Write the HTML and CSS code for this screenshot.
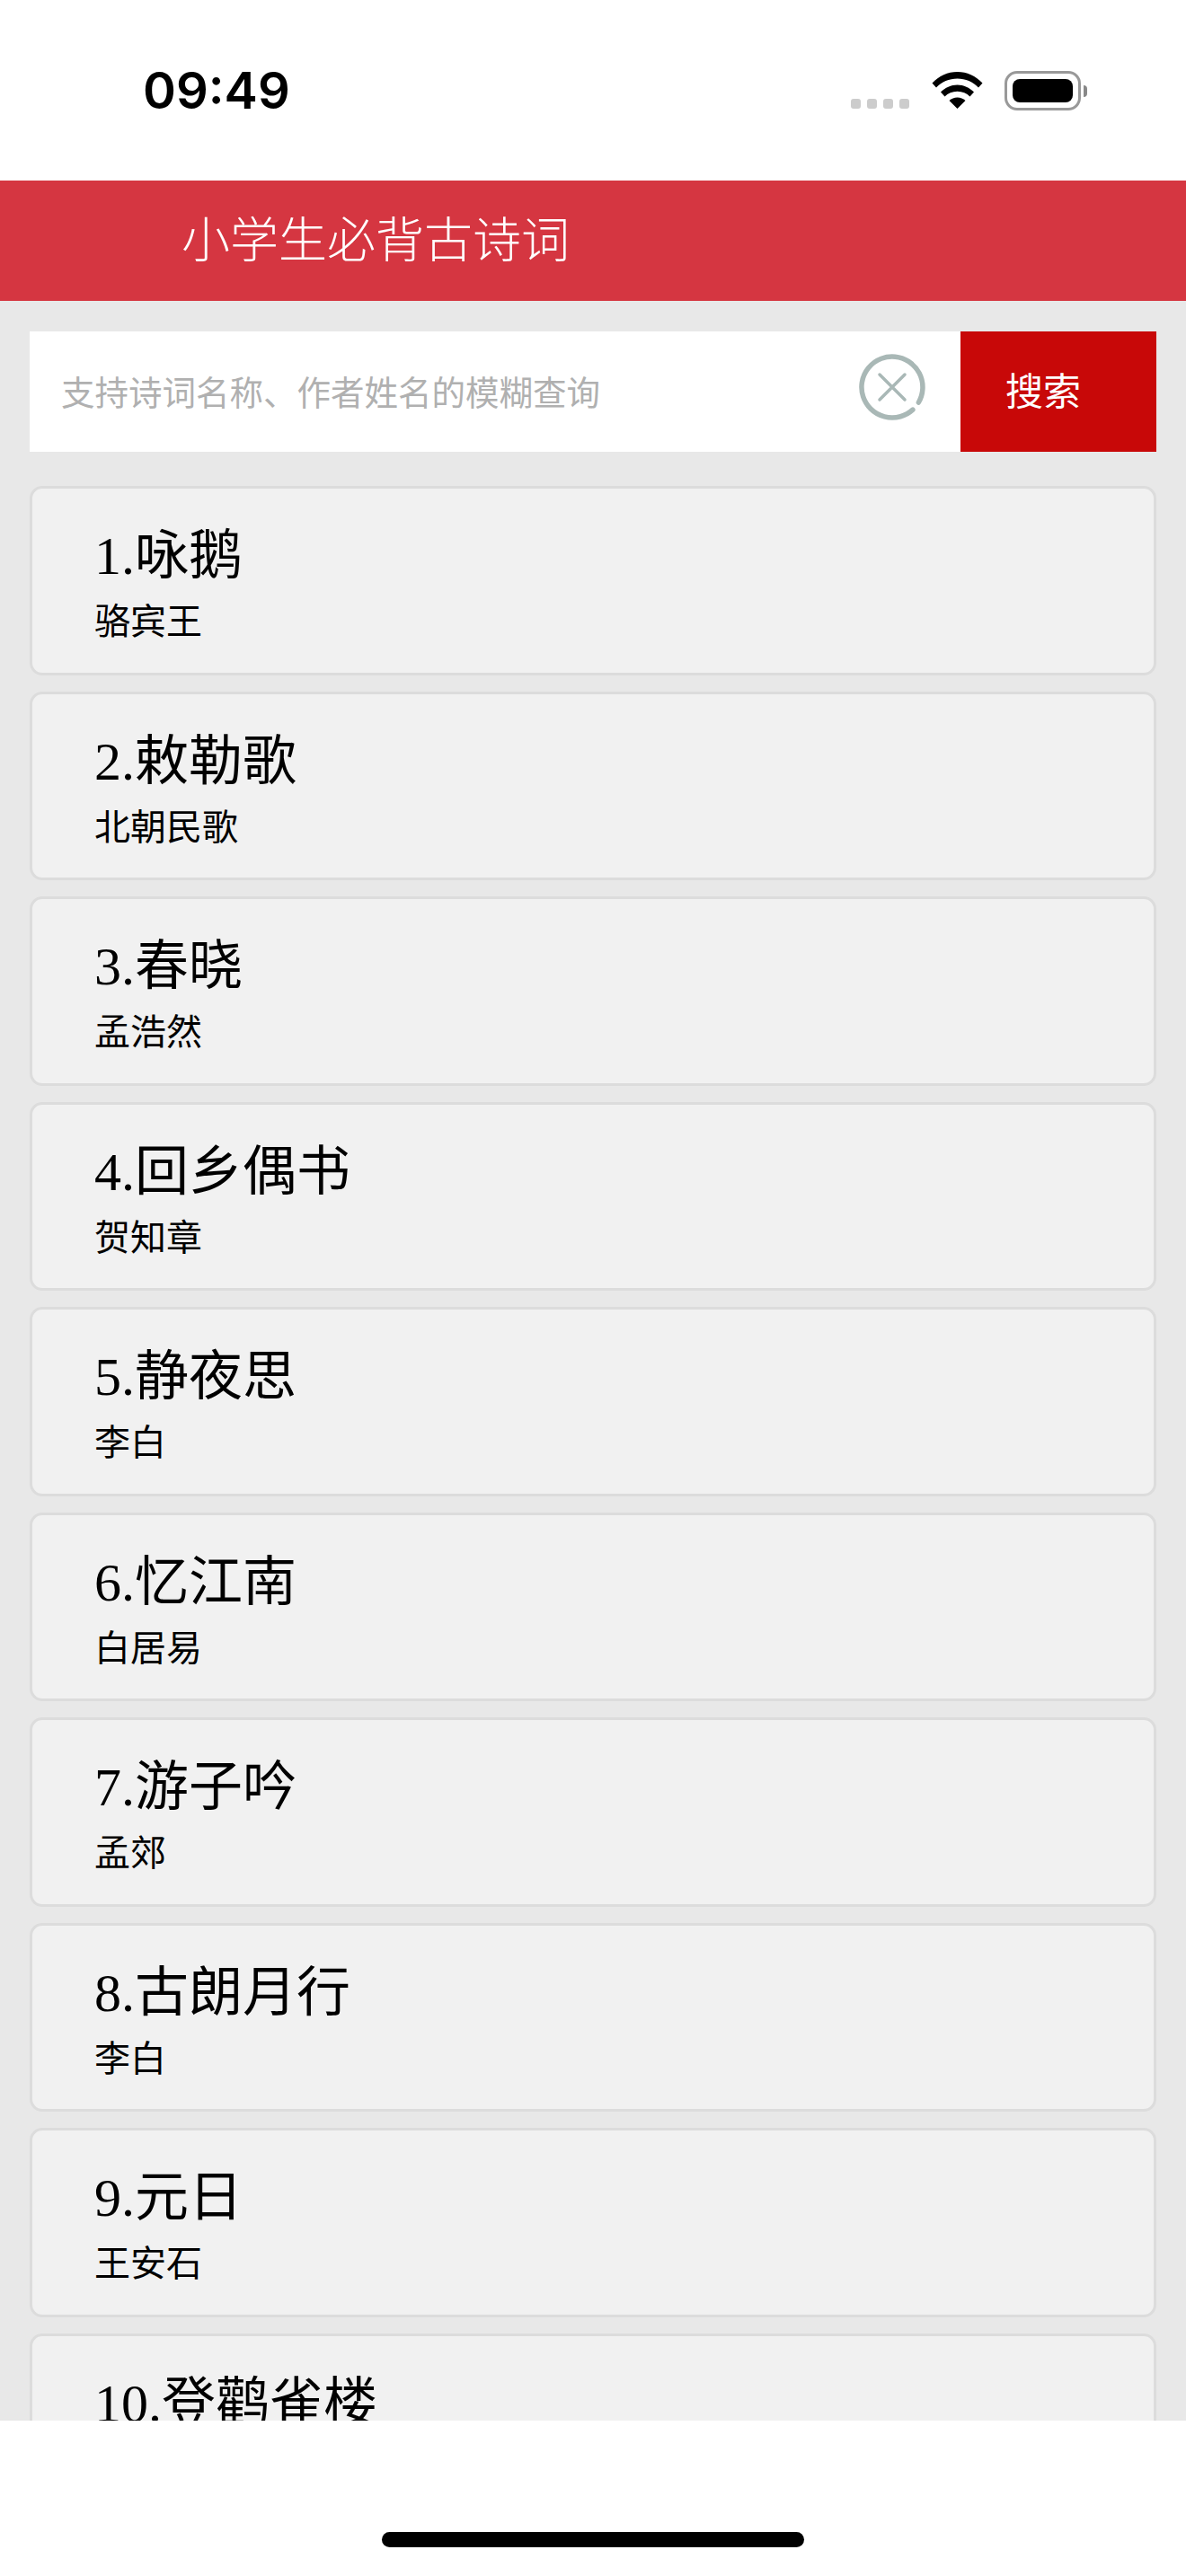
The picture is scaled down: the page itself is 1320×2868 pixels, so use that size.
FILE: index.html
```html
<!DOCTYPE html>
<html lang="zh-CN">
<head>
    <meta charset="utf-8">
    <title>小学生必背古诗词</title>
    <link rel="stylesheet" href="styles.css">
</head>
<body>
    <div class="screen">
        <!-- Status bar -->
        <div class="status-bar">
            <span class="time">09:49</span>
            <div class="status-icons">
                <div class="signal-dots">
                    <span></span><span></span><span></span><span></span>
                </div>
                <svg class="wifi" width="57" height="42" viewBox="0 0 57 42">
                    <path d="M0.5 13.5C8 5.5 18 1 28.5 1S49 5.5 56.5 13.5L52 18.5C46 12 37.500 8.500 28.500 8.500S11 12 5 18.500Z"/>
                    <path d="M10 23.500C15 18.500 21.500 15.500 28.500 15.500S42 18.500 47 23.500L42.500 28.500C39 25 34 22.800 28.500 22.800S18 25 14.500 28.500Z"/>
                    <path d="M19.500 33C22 30.800 25 29.500 28.500 29.500S35 30.800 37.500 33L28.500 42Z"/>
                </svg>
                <div class="battery">
                    <div class="battery-body"><div class="battery-level"></div></div>
                    <div class="battery-cap"></div>
                </div>
            </div>
        </div>

        <!-- Title bar -->
        <header class="title-bar">小学生必背古诗词</header>

        <main class="content">
            <!-- Search -->
            <form class="search">
                <div class="search-box">
                    <input class="search-input" type="text" placeholder="支持诗词名称、作者姓名的模糊查询">
                    <svg class="clear-icon" width="74" height="74" viewBox="0 0 74 74">
                        <path d="M59.900 62.100A34 34 0 1 1 66.400 54" fill="none" stroke="#a9b8b6" stroke-width="5.500" stroke-linecap="round"/>
                        <path d="M23 23L51 51M51 23L23 51" fill="none" stroke="#a9b8b6" stroke-width="3.500" stroke-linecap="round"/>
                    </svg>
                </div>
                <button class="search-button" type="button">搜索</button>
            </form>

            <!-- Poem list -->
            <ul class="poem-list">
                <li class="poem"><h2 class="poem-title">1.咏鹅</h2><p class="poem-author">骆宾王</p></li>
                <li class="poem"><h2 class="poem-title">2.敕勒歌</h2><p class="poem-author">北朝民歌</p></li>
                <li class="poem"><h2 class="poem-title">3.春晓</h2><p class="poem-author">孟浩然</p></li>
                <li class="poem"><h2 class="poem-title">4.回乡偶书</h2><p class="poem-author">贺知章</p></li>
                <li class="poem"><h2 class="poem-title">5.静夜思</h2><p class="poem-author">李白</p></li>
                <li class="poem"><h2 class="poem-title">6.忆江南</h2><p class="poem-author">白居易</p></li>
                <li class="poem"><h2 class="poem-title">7.游子吟</h2><p class="poem-author">孟郊</p></li>
                <li class="poem"><h2 class="poem-title">8.古朗月行</h2><p class="poem-author">李白</p></li>
                <li class="poem"><h2 class="poem-title">9.元日</h2><p class="poem-author">王安石</p></li>
                <li class="poem"><h2 class="poem-title">10.登鹳雀楼</h2></li>
            </ul>
        </main>

        <!-- Home indicator -->
        <div class="home-area">
            <div class="home-bar"></div>
        </div>
    </div>
</body>
</html>
```

FILE: styles.css
```css
* {
    box-sizing: border-box;
}

body {
    margin: 0;
    background-color: white;
    font-family: "Liberation Serif", "Noto Sans CJK SC", serif;
}

.screen {
    display: flex;
    flex-direction: column;
    height: 2868px;
    overflow: hidden;
}

.status-bar {
    display: flex;
    flex: none;
    justify-content: space-between;
    height: 201px;
    padding: 0 110px 0 159px;
    background-color: white;
}

.time {
    margin-top: 69px;
    font-family: Inter, sans-serif;
    font-size: 56px;
    font-weight: 600;
    line-height: 64px;
}

.status-icons {
    display: flex;
    align-items: flex-start;
    padding-top: 79px;
}

.signal-dots {
    display: flex;
    gap: 7px;
    margin-top: 31px;
    margin-right: 25px;
}

.signal-dots span {
    width: 11px;
    height: 11px;
    border-radius: 3px;
    background-color: #cccccc;
}

.wifi {
    margin-right: 24px;
}

.battery {
    display: flex;
    align-items: center;
}

.battery-body {
    width: 85px;
    height: 44px;
    padding: 6px;
    border: 3px solid #999999;
    border-radius: 14px;
}

.battery-level {
    height: 100%;
    border-radius: 8px;
    background-color: black;
}

.battery-cap {
    width: 4px;
    height: 13px;
    margin-left: 3px;
    border-radius: 0 4px 4px 0;
    background-color: #888888;
}

.title-bar {
    flex: none;
    height: 134px;
    padding-left: 202px;
    background-color: #d53641;
    color: white;
    font-family: "Noto Sans CJK SC", sans-serif;
    font-size: 54px;
    font-weight: 300;
    line-height: 126px;
}

.content {
    flex: 1;
    min-height: 0;
    overflow: hidden;
    padding: 34px 33px 0;
    background-color: #e8e8e8;
}

.search {
    display: flex;
    height: 134px;
    margin-bottom: 38px;
}

.search-box {
    display: flex;
    flex: 1;
    align-items: center;
    padding: 0 39px 0 35px;
    background-color: white;
}

.search-input {
    flex: 1;
    min-width: 0;
    margin-bottom: 3px;
    padding: 0;
    border: none;
    outline: none;
    background: none;
    font-family: "Noto Sans CJK SC", sans-serif;
    font-size: 37.500px;
}

.search-input::placeholder {
    color: #b0b0b0;
}

.clear-icon {
    flex: none;
    margin-bottom: 10px;
}

.search-button {
    flex: none;
    width: 218px;
    padding: 0 0 7px 50px;
    border: none;
    background-color: #c80808;
    color: white;
    font-family: "Noto Sans CJK SC", sans-serif;
    font-size: 42px;
    text-align: left;
}

.poem-list {
    margin: 0;
    padding: 0;
    list-style: none;
}

.poem {
    height: 210.500px;
    margin-bottom: 18px;
    padding: 40px 0 0 69px;
    border: 3px solid #dcdcdc;
    border-radius: 14px;
    background-color: #f1f1f1;
}

.poem-title {
    margin: 0;
    font-size: 60px;
    font-weight: normal;
    line-height: 70px;
}

.poem-author {
    margin: 14px 0 0;
    font-size: 40px;
    line-height: 50px;
}

.home-area {
    display: flex;
    flex: none;
    justify-content: center;
    height: 173px;
    padding-top: 124px;
    background-color: white;
}

.home-bar {
    width: 470px;
    height: 17px;
    border-radius: 9px;
    background-color: black;
}
```
